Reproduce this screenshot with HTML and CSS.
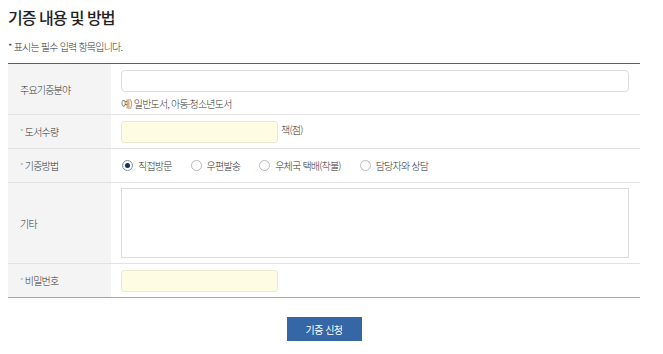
FILE: index.html
```html
<!DOCTYPE html>
<html lang="ko">
<head>
  <meta charset="UTF-8" />
  <title>기증 내용 및 방법</title>
  <link rel="stylesheet" href="styles.css">
</head>
<body>
  <h2 class="title">기증 내용 및 방법</h2>
  <p class="note">* 표시는 필수 입력 항목입니다.</p>

  <form class="donate-form">
    <div class="form-table">
      <div class="row row-field">
        <div class="label">주요기증분야</div>
        <div class="value">
          <input type="text" class="input-full" />
          <p class="hint">예) 일반도서, 아동·청소년도서</p>
        </div>
      </div>
      <div class="row">
        <div class="label"><span class="req">*</span> 도서수량</div>
        <div class="value">
          <input type="text" class="input-short" />
          <span class="unit">책(점)</span>
        </div>
      </div>
      <div class="row">
        <div class="label"><span class="req">*</span> 기증방법</div>
        <div class="value radios">
          <label class="radio"><input type="radio" name="method" checked /><span class="dot"></span>직접방문</label>
          <label class="radio"><input type="radio" name="method" /><span class="dot"></span>우편발송</label>
          <label class="radio"><input type="radio" name="method" /><span class="dot"></span>우체국 택배(착불)</label>
          <label class="radio"><input type="radio" name="method" /><span class="dot"></span>담당자와 상담</label>
        </div>
      </div>
      <div class="row row-memo">
        <div class="label">기타</div>
        <div class="value">
          <textarea class="memo"></textarea>
        </div>
      </div>
      <div class="row">
        <div class="label"><span class="req">*</span> 비밀번호</div>
        <div class="value">
          <input type="password" class="input-short" />
        </div>
      </div>
    </div>

    <div class="actions">
      <button type="submit">기증 신청</button>
    </div>
  </form>
</body>
</html>
```

FILE: styles.css
```css
body {
  font-family: "Noto Sans CJK KR", "Noto Sans", sans-serif;
  color: #333;
  margin: 0;
  padding: 0 23px 0 8px;
  background: #fff;
}
.title {
  font-size: 16px;
  font-weight: 500;
  color: #222;
  letter-spacing: -1px;
  margin: 6px 0 0;
  line-height: 22px;
}
.note {
  font-size: 10px;
  font-weight: 300;
  letter-spacing: -0.8px;
  color: #333;
  margin: 12px 0 0;
  line-height: 14px;
}
.form-table {
  margin-top: 9px;
  border-top: 1px solid #4a6580;
  border-bottom: 1px solid #a8a8a8;
}
.row {
  display: grid;
  grid-template-columns: 103px 1fr;
  height: 34px;
  box-sizing: border-box;
  border-bottom: 1px solid #e2e2e2;
}
.row:last-child {
  border-bottom: none;
  height: 33px;
}
.row-field {
  height: 51px;
}
.row-memo {
  height: 81px;
}
.label {
  background: #f4f4f4;
  display: flex;
  align-items: center;
  padding-left: 12px;
  font-size: 10px;
  font-weight: 300;
  letter-spacing: -0.8px;
  color: #333;
}
.req {
  color: #888;
  font-size: 8px;
  margin-right: 2px;
}
.value {
  display: flex;
  align-items: center;
  padding: 0 11px 0 10px;
  font-size: 10px;
  font-weight: 300;
  letter-spacing: -0.8px;
  color: #333;
}
.row-field .value {
  flex-direction: column;
  align-items: stretch;
  justify-content: flex-start;
  padding-top: 6px;
}
.row-memo .value {
  align-items: flex-start;
  padding-top: 5px;
}
input[type="text"],
input[type="password"] {
  box-sizing: border-box;
  height: 22px;
  margin: 0;
  font-family: inherit;
  outline: none;
}
.input-full {
  width: 100%;
  border: 1px solid #dcdcdc;
  border-radius: 4px;
  background: #fff;
}
.input-short {
  width: 157px;
  border: 1px solid #ece9d2;
  border-radius: 3px;
  background: #fefde4;
}
.hint {
  margin: 5px 0 0;
  line-height: 14px;
}
.unit {
  margin-left: 3px;
  align-self: flex-start;
  margin-top: 8px;
  line-height: 14px;
}
.radios {
  gap: 18px;
}
.radio {
  display: flex;
  align-items: center;
  cursor: pointer;
}
.radio input {
  display: none;
}
.dot {
  width: 9px;
  height: 9px;
  border: 1px solid #b8b8b8;
  border-radius: 50%;
  margin: 0 5px 0 1px;
  box-sizing: content-box;
  position: relative;
}
.radio input:checked + .dot {
  border-color: #7c8fa6;
}
.radio input:checked + .dot::after {
  content: "";
  position: absolute;
  left: 2px;
  top: 2px;
  width: 5px;
  height: 5px;
  border-radius: 50%;
  background: #0c3461;
}
.memo {
  box-sizing: border-box;
  width: 100%;
  height: 70px;
  border: 1px solid #dcdcdc;
  resize: none;
  margin: 0;
  outline: none;
}
.actions {
  display: flex;
  justify-content: center;
  margin-top: 19px;
}
button {
  width: 75px;
  height: 24px;
  border: none;
  background: #3566a6;
  color: #fff;
  font-family: inherit;
  font-size: 10px;
  letter-spacing: -0.5px;
  cursor: pointer;
}
```
